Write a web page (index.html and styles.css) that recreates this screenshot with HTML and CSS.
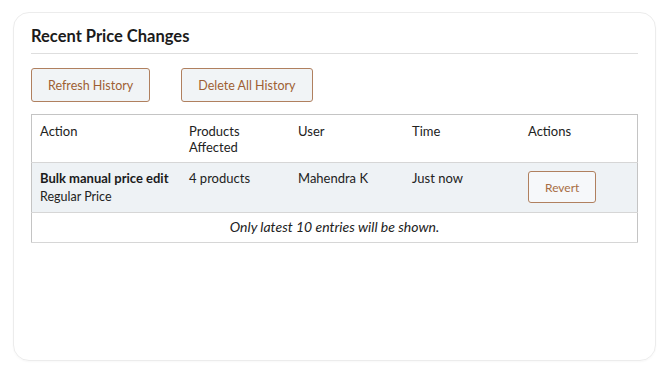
FILE: index.html
```html
<!DOCTYPE html>
<html lang="en">
<head>
    <meta charset="UTF-8">
    <meta name="viewport" content="width=device-width, initial-scale=1.0">
    <title>Recent Price Changes</title>
    <link rel="stylesheet" href="styles.css">
</head>
<body>
    <div class="card">
        <h2 class="card-title">Recent Price Changes</h2>

        <div class="history-buttons">
            <button class="btn">Refresh History</button>
            <button class="btn">Delete All History</button>
        </div>

        <table class="history-table">
            <thead>
                <tr>
                    <th class="col-action">Action</th>
                    <th class="col-products">Products<br>Affected</th>
                    <th class="col-user">User</th>
                    <th class="col-time">Time</th>
                    <th class="col-actions">Actions</th>
                </tr>
            </thead>
            <tbody>
                <tr class="entry">
                    <td>
                        <div class="entry-title">Bulk manual price edit</div>
                        <div class="entry-sub">Regular Price</div>
                    </td>
                    <td>4 products</td>
                    <td>Mahendra K</td>
                    <td>Just now</td>
                    <td><button class="btn btn-small">Revert</button></td>
                </tr>
                <tr class="note">
                    <td colspan="5">Only latest 10 entries will be shown.</td>
                </tr>
            </tbody>
        </table>
    </div>
</body>
</html>
```

FILE: styles.css
```css
/* Basic Styles */
body {
    font-family: Lato, "Open Sans", sans-serif;
    background-color: #ffffff;
    margin: 0;
    padding: 12px 13px;
    color: #222;
}

.card {
    height: 349px;
    box-sizing: border-box;
    border: 1px solid #ececec;
    border-radius: 16px;
    padding: 13px 17px;
    box-shadow: 0 1px 2px rgba(0, 0, 0, 0.03);
}

.card-title {
    margin: 0;
    font-size: 16.5px;
    line-height: 21px;
    font-weight: bold;
    color: #1b1b1b;
    padding-bottom: 6px;
    border-bottom: 1px solid #dedede;
}

/* Buttons */
.history-buttons {
    display: flex;
    gap: 31px;
    margin-top: 14px;
}

.btn {
    font-family: inherit;
    font-size: 12.5px;
    color: #9e5f33;
    background-color: #f1f4f6;
    border: 1px solid #b0805f;
    border-radius: 3px;
    height: 34px;
    padding: 0 16px;
    cursor: pointer;
}

.btn:hover {
    background-color: #e7ecef;
}

.btn-small {
    font-size: 12px;
    height: 32px;
    padding: 0 16px;
    margin-top: 1px;
    color: #a86d44;
    background-color: #f6f8fa;
}

/* Table */
.history-table {
    width: 100%;
    margin-top: 12px;
    border-collapse: collapse;
    border: 1px solid #c4c4c4;
    font-size: 13px;
    table-layout: fixed;
}

.history-table th,
.history-table td {
    text-align: left;
    vertical-align: top;
    padding: 8px 9px 7px 8px;
    line-height: 16px;
    font-weight: normal;
    border-bottom: 1px solid #d6d6d6;
}

.col-action { width: 132px; }
.col-products { width: 92px; }
.col-user { width: 97px; }
.col-time { width: 99px; }

.entry td {
    background-color: #eef2f5;
    padding-top: 7px;
    padding-bottom: 7px;
}

.entry-title {
    font-weight: bold;
    color: #1b1b1b;
}

.entry-sub {
    font-size: 12.5px;
    margin-top: 3px;
}

.note td {
    text-align: center;
    font-style: italic;
    font-size: 14px;
    padding: 6px 9px 7px;
}
```
